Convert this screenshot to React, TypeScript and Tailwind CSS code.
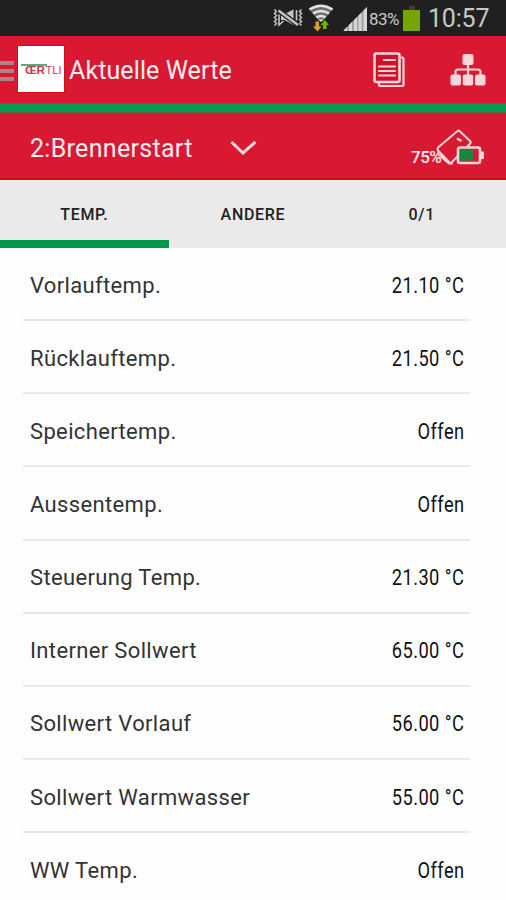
import { ReactNode, useState } from "react";

interface Reading {
  label: string;
  value: string;
}

const readings: Reading[] = [
  { label: "Vorlauftemp.", value: "21.10 °C" },
  { label: "Rücklauftemp.", value: "21.50 °C" },
  { label: "Speichertemp.", value: "Offen" },
  { label: "Aussentemp.", value: "Offen" },
  { label: "Steuerung Temp.", value: "21.30 °C" },
  { label: "Interner Sollwert", value: "65.00 °C" },
  { label: "Sollwert Vorlauf", value: "56.00 °C" },
  { label: "Sollwert Warmwasser", value: "55.00 °C" },
  { label: "WW Temp.", value: "Offen" },
];

const tabs = ["TEMP.", "ANDERE", "0/1"];

function MuteIcon() {
  return (
    <svg className="h-5 w-[30px]" viewBox="0 0 30 20" fill="none" stroke="#c4c4c4">
      <path d="M1.500 1.500l2 2-2 2 2 2-2 2 2 2-2 2 2 2-2 2M28.500 1.500l-2 2 2 2-2 2 2 2-2 2 2 2-2 2 2 2" strokeWidth="1.500" />
      <path d="M8 6h3.500L20.500 1.500V17L11.500 12H8z" fill="#c4c4c4" stroke="none" />
      <path d="M5 2L25 17" stroke="#222" strokeWidth="5" />
      <path d="M5.500 2.500L25 17" strokeWidth="2.400" />
      <path d="M6 6.500V17l4.500-4M23.500 2v10.500" strokeWidth="1.600" />
    </svg>
  );
}

function WifiIcon() {
  return (
    <svg className="h-7 w-[26px]" viewBox="0 0 26 28" fill="none">
      <path d="M1 5Q13-2.500 25 5L15 17h-4z" fill="#707070" />
      <g stroke="#e2e2e2" strokeWidth="2.600">
        <path d="M1.500 5.500Q13-2 24.500 5.500" />
        <path d="M5 9.500Q13 4.500 21 9.500" />
        <path d="M8.500 13.500Q13 10.500 17.500 13.500" />
      </g>
      <path d="M10.500 15.500h5L13 18z" fill="#dedede" />
      <path d="M7.500 17.500h3.500v5h2.500L9.500 27.500 5 22.500h2.500z" fill="#d9a520" />
      <path d="M15 25h3.500v-4H21l-4-5-4.500 5H15z" fill="#72b500" />
    </svg>
  );
}

function SignalIcon() {
  return (
    <svg className="h-6 w-6" viewBox="0 0 24 24">
      <path d="M0 24L24 0v24z" fill="#a0a0a0" />
      <g fill="#d6d6d6">
        <path d="M1 24v-1l3-3v4zM6 24v-6l3-3v9zM11 24V13l3-3v14zM15.500 24V8.500l3-3V24zM20.500 24V3.500L24 0v24z" />
      </g>
    </svg>
  );
}

function Logo() {
  return (
    <svg className="h-[46px] w-[46px]" viewBox="0 0 46 46">
      <rect width="46" height="46" fill="#fff" />
      <path d="M3 19H29" stroke="#3aa66b" strokeWidth="1.800" />
      <g fill="#c73a50" fontFamily="Liberation Sans, sans-serif" fontSize="10.500">
        <text x="7" y="28" textLength="20" lengthAdjust="spacingAndGlyphs" fontWeight="bold">
          ŒR
        </text>
        <text x="27.500" y="28" textLength="16" lengthAdjust="spacingAndGlyphs">
          TLI
        </text>
      </g>
    </svg>
  );
}

function DocumentsIcon() {
  return (
    <svg className="h-9 w-8" viewBox="0 0 32 36" fill="none" stroke="#ffd5da" strokeWidth="2.200">
      <path d="M27 5.500h2q1.500 0 1.500 1.500v25.500q0 1.500-1.500 1.500H7.500Q6 34 6 32.500V31" />
      <rect x="1.500" y="1.500" width="25" height="28.500" rx="2" fill="#d01028" strokeWidth="2.600" />
      <path d="M11 8h11M6 14.500h16M6 19h16M6 23.500h16" strokeLinecap="round" />
    </svg>
  );
}

function TreeIcon() {
  return (
    <svg className="h-8 w-9" viewBox="0 0 36 32" fill="#ffd5da">
      <rect x="12.500" width="11" height="11" rx="2" />
      <rect x="0.500" y="20.500" width="10.500" height="11" rx="2" />
      <rect x="12.700" y="20.500" width="10.500" height="11" rx="2" />
      <rect x="25" y="20.500" width="10.500" height="11" rx="2" />
      <path d="M18 10v11M5.500 21v-3q0-2.500 2.500-2.500h20q2.500 0 2.500 2.500v3" fill="none" stroke="#ffd5da" strokeWidth="2.200" />
    </svg>
  );
}

// Remote control with its battery level in front
function RemoteBatteryIcon() {
  return (
    <svg className="h-[38px] w-[50px]" viewBox="0 0 50 38" fill="none" stroke="#ffd5da" strokeWidth="2">
      <path d="M3 18.500L22.500 2q1-1 2 0L35.500 12.500q.8 1-.3 2L16.500 33.500q-1 1-2 0L3 21.500q-1-1.500 0-3zM3.500 22v3.500l10.500 9h4" />
      <path d="M22 9.500l4.500 2.500" strokeWidth="2.500" />
      <rect x="23" y="18.500" width="22" height="15.500" rx="2" fill="#d91832" strokeWidth="2.600" />
      <path d="M47.500 22.500v7.500" strokeWidth="3" />
      <rect x="25" y="21" width="13" height="10.500" fill="#14883f" stroke="none" />
    </svg>
  );
}

function StatusBar() {
  return (
    <div className="flex h-9 items-start bg-[#202020] pl-[273px] text-[#c8c8c8]">
      <div className="mt-2">
        <MuteIcon />
      </div>
      <div className="mt-1 ml-[5px]">
        <WifiIcon />
      </div>
      <div className="mt-[7px] ml-[9px]">
        <SignalIcon />
      </div>
      <span className="mt-[7px] ml-[2px] w-[34px] text-[17px] leading-6 tracking-[-0.6px]">83%</span>
      <div className="mt-[6px] flex w-[17px] flex-col items-center">
        <div className="h-1 w-[6px] bg-[#3c3c3c]" />
        <div className="h-[21px] w-full bg-[#75a500]" />
      </div>
      <span className="mt-[4px] ml-[8px] text-[25px] leading-[30px] tracking-[-0.2px]">10:57</span>
    </div>
  );
}

function Header({ children }: { children: ReactNode }) {
  return (
    <div className="flex h-[67px] items-center bg-[#d91832]">
      <div className="mt-[2px] flex w-[14px] flex-col gap-1">
        <div className="h-1 bg-[#ad8389]" />
        <div className="h-1 bg-[#ad8389]" />
        <div className="h-1 bg-[#ad8389]" />
      </div>
      <div className="mb-[2px] ml-1 outline outline-[#cc0e12]">
        <Logo />
      </div>
      {children}
    </div>
  );
}

export default function App() {
  const [activeTab, setActiveTab] = useState(0);

  return (
    <div className="h-[900px] w-[506px] overflow-hidden bg-[#fefefe] font-['Roboto',sans-serif]">
      <StatusBar />
      <Header>
        <h1 className="mt-[2px] ml-[5px] w-[304px] text-[25px] tracking-[0.1px] text-[#ffeef0]">
          Aktuelle Werte
        </h1>
        <DocumentsIcon />
        <div className="ml-[45px]">
          <TreeIcon />
        </div>
      </Header>
      <div className="h-[10px] border-y border-[#66604a] bg-[#059c52]" />
      <div className="flex h-[67px] items-center border-b-2 border-[#cf0b15] bg-[#d91832] pt-1 pl-[30px] text-[#ffeef0]">
        <span className="mt-[2px] w-[200px] text-[25px] tracking-[0.3px]">2:Brennerstart</span>
        <svg className="h-4 w-7" viewBox="0 0 28 16" fill="none" stroke="#ffd9dd" strokeWidth="3">
          <path d="M1.500 2L13 13 25.500 2" />
        </svg>
        <span className="mt-[21px] ml-[153px] w-[24px] text-[17px] font-medium tracking-[-0.5px] whitespace-nowrap">
          75%
        </span>
        <RemoteBatteryIcon />
      </div>
      <div className="grid h-[68px] grid-cols-3 bg-[#eaeaea]">
        {tabs.map((tab, index) => (
          <button
            key={tab}
            className={
              "border-b-8 pt-[10px] text-[16px] font-medium tracking-[0.7px] text-[#222] " +
              (index == activeTab ? "border-[#04974b]" : "border-transparent")
            }
            onClick={() => setActiveTab(index)}
          >
            {tab}
          </button>
        ))}
      </div>
      <div className="mr-9 ml-[23px]">
        {readings.map((reading) => (
          <div
            key={reading.label}
            className="flex h-[73.15px] items-center justify-between border-b-2 border-[#e9e9e9] pt-[3px] pr-[6px] pl-[7px] text-[22px]"
          >
            <span className="tracking-[0.35px] text-[#333]">{reading.label}</span>
            <span className="origin-right scale-x-[0.83] tracking-[0.5px] text-[#111]">
              {reading.value}
            </span>
          </div>
        ))}
      </div>
    </div>
  );
}
